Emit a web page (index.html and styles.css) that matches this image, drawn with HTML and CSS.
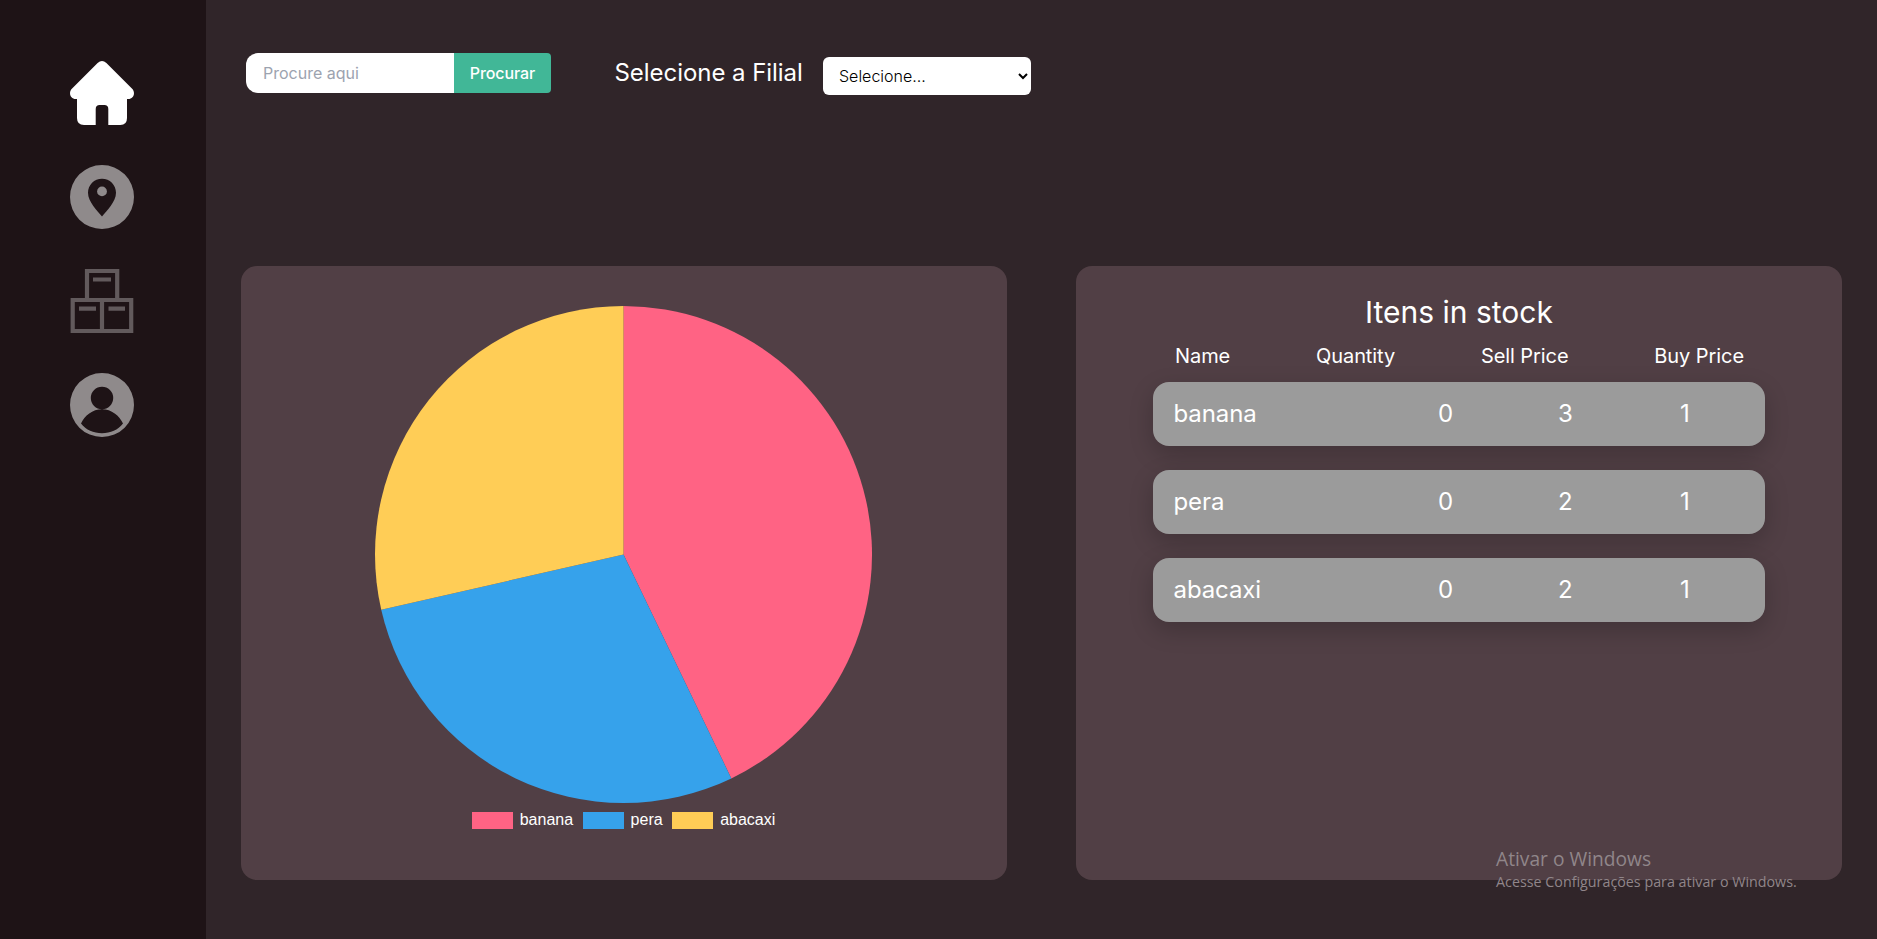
FILE: index.html
```html
<!DOCTYPE html>
<html lang="pt-BR">
<head>
<meta charset="utf-8">
<title>Dashboard</title>
<link rel="stylesheet" href="styles.css">
</head>
<body>
<div class="app">
  <nav class="sidebar">
    <svg class="icon icon-active" viewBox="0 0 64 64"><path d="M27.6 2.1Q32-2 36.4 2.1L61.9 27.400C66 31.500 63.6 38 58.3 38H57V57Q57 64 50.3 64H38.3V48Q38.3 44 34.3 44H29.7Q25.7 44 25.7 48V64H14Q7 64 7 57V38H5.700C.4 38-2 31.500 2.1 27.400Z"/></svg>
    <svg class="icon icon-muted" viewBox="0 0 64 64"><path fill-rule="evenodd" d="M32 0a32 32 0 1 0 0 64a32 32 0 0 0 0-64ZM32 13.8c7.800 0 14 6.200 14 14C46 37 36.500 46 32 51.500C27.500 46 18 37 18 27.800c0-7.800 6.200-14 14-14Z"/><circle cx="32" cy="26.400" r="4.900"/></svg>
    <svg class="icon icon-boxes" viewBox="0 0 64 64"><path d="M17 31V2H47.200V31M2.700 31H61.200V62H2.700ZM32 31V62M23 10.500H41M9 39.700H26M38.500 39.700H55"/></svg>
    <svg class="icon icon-muted" viewBox="0 0 64 64"><path fill-rule="evenodd" d="M32 0a32 32 0 1 0 0 64a32 32 0 0 0 0-64ZM32 13.800a11.200 11.200 0 1 1 0 22.400a11.200 11.200 0 0 1 0-22.400ZM11 50.500C14.500 42.500 22.500 36.200 32 36.200S49.500 42.500 53 50.500C48 57 40.500 60.200 32 60.200S16 57 11 50.500Z"/></svg>
  </nav>
  <main class="content">
    <header class="toolbar">
      <form class="search">
        <input class="search-input" type="text" placeholder="Procure aqui">
        <button class="search-button" type="button">Procurar</button>
      </form>
      <label class="branch-label" for="branch">Selecione a Filial</label>
      <select class="branch-select" id="branch"><option>Selecione...</option></select>
    </header>
    <div class="cards">
      <section class="card chart-card">
        <svg class="pie" viewBox="-248.400 -248.400 496.800 496.800">
          <path class="slice-pink" d="M0 0V-248.400A248.400 248.400 0 0 1 107.780 223.800Z"/>
          <path class="slice-blue" d="M0 0L107.780 223.800A248.400 248.400 0 0 1 -242.170 55.270Z"/>
          <path class="slice-yellow" d="M0 0L-242.170 55.270A248.400 248.400 0 0 1 0 -248.400Z"/>
        </svg>
        <div class="legend">
          <span class="swatch swatch-pink"></span><span class="legend-text">banana</span>
          <span class="swatch swatch-blue"></span><span class="legend-text">pera</span>
          <span class="swatch swatch-yellow"></span><span class="legend-text">abacaxi</span>
        </div>
      </section>
      <section class="card stock-card">
        <h1 class="stock-title">Itens in stock</h1>
        <div class="stock-head"><span>Name</span><span>Quantity</span><span>Sell Price</span><span>Buy Price</span></div>
        <ul class="stock-list">
          <li class="stock-row"><span>banana</span><span>0</span><span>3</span><span>1</span></li>
          <li class="stock-row"><span>pera</span><span>0</span><span>2</span><span>1</span></li>
          <li class="stock-row"><span>abacaxi</span><span>0</span><span>2</span><span>1</span></li>
        </ul>
      </section>
    </div>
  </main>
</div>
<aside class="watermark">
  <p class="watermark-title">Ativar o Windows</p>
  <p class="watermark-text">Acesse Configurações para ativar o Windows.</p>
</aside>
</body>
</html>
```
FILE: styles.css
```css
* { box-sizing: border-box; margin: 0; padding: 0; }
body { font-family: Inter, "Liberation Sans", sans-serif; color: #fff; background: #302529; overflow: hidden; }
.app { display: flex; width: 100%; height: 100vh; }
.sidebar { flex: none; width: 206px; padding: 61px 2px 0 0; background: #1e1316; display: flex; flex-direction: column; align-items: center; gap: 40px; }
.icon { width: 64px; height: 64px; display: block; }
.icon-active { fill: #fff; }
.icon-muted { fill: #8f8a8b; }
.icon-boxes { fill: none; stroke: #625a5c; stroke-width: 4.2; }
.content { flex: 1; padding: 53px 35px 0; }
.toolbar { display: flex; align-items: flex-start; height: 213px; padding-left: 5px; }
.search { display: flex; }
.search-input { width: 208px; height: 40px; padding: 0 17px; border: 0; border-radius: 12px 0 0 12px; background: #fff; font: 16px Inter, sans-serif; }
.search-input::placeholder { color: #9ca3af; opacity: 1; }
.search-button { width: 97px; height: 40px; border: 0; border-radius: 0 4px 4px 0; background: #41b797; color: #fff; font: 500 16px Inter, sans-serif; letter-spacing: -.1px; }
.branch-label { margin-left: 63.5px; font-size: 24px; letter-spacing: -.05px; line-height: 40px; width: 208.5px; white-space: nowrap; }
.branch-select { width: 208px; height: 38px; margin-top: 4px; padding: 0 12px; border: 0; border-radius: 6px; background: #fff; color: #000; font: 300 16px Inter, sans-serif; }
.cards { display: grid; grid-template-columns: 766px 766px; gap: 69px; }
.card { height: 614px; border-radius: 16px; background: #513f45; }
.chart-card { display: flex; flex-direction: column; align-items: center; padding: 40px 1px 0 0; }
.pie { width: 497px; height: 497px; }
.slice-pink { fill: #ff6384; }
.slice-blue { fill: #36a2eb; }
.slice-yellow { fill: #ffcd56; }
.legend { display: flex; align-items: center; margin-top: 7px; height: 20px; font: 16px/18px "Liberation Sans", sans-serif; }
.swatch { width: 41px; height: 17px; margin: 1px 7px 0 0; }
.swatch-pink { background: #ff6384; }
.swatch-blue { background: #36a2eb; }
.swatch-yellow { background: #ffcd56; }
.legend-text { margin-right: 9.5px; }
.legend-text:last-child { margin-right: 0; }
.stock-card { padding: 28px 77px 0; }
.stock-title { font-size: 30px; font-weight: 400; line-height: 36px; text-align: center; }
.stock-head { display: flex; justify-content: space-between; padding: 12px 21px 0 22px; font-size: 20px; letter-spacing: -.08px; line-height: 28px; }
.stock-list { list-style: none; display: grid; gap: 24px; margin-top: 12px; }
.stock-row { display: grid; grid-template-columns: 212px 120px 119.5px 119.5px; align-items: center; height: 64px; padding: 0 20px 2px 20.5px; border-radius: 16px; background: #9b9b9b; font-size: 24px; letter-spacing: -.1px; box-shadow: 0 8px 24px rgba(0,0,0,.2); }
.stock-row span + span { text-align: center; }
.watermark { position: absolute; left: 1496px; top: 846px; color: #90868a; font-family: "Open Sans", sans-serif; pointer-events: none; }
.watermark-title { font-size: 19.2px; line-height: 26px; }
.watermark-text { font-size: 14.3px; line-height: 20px; }
```
